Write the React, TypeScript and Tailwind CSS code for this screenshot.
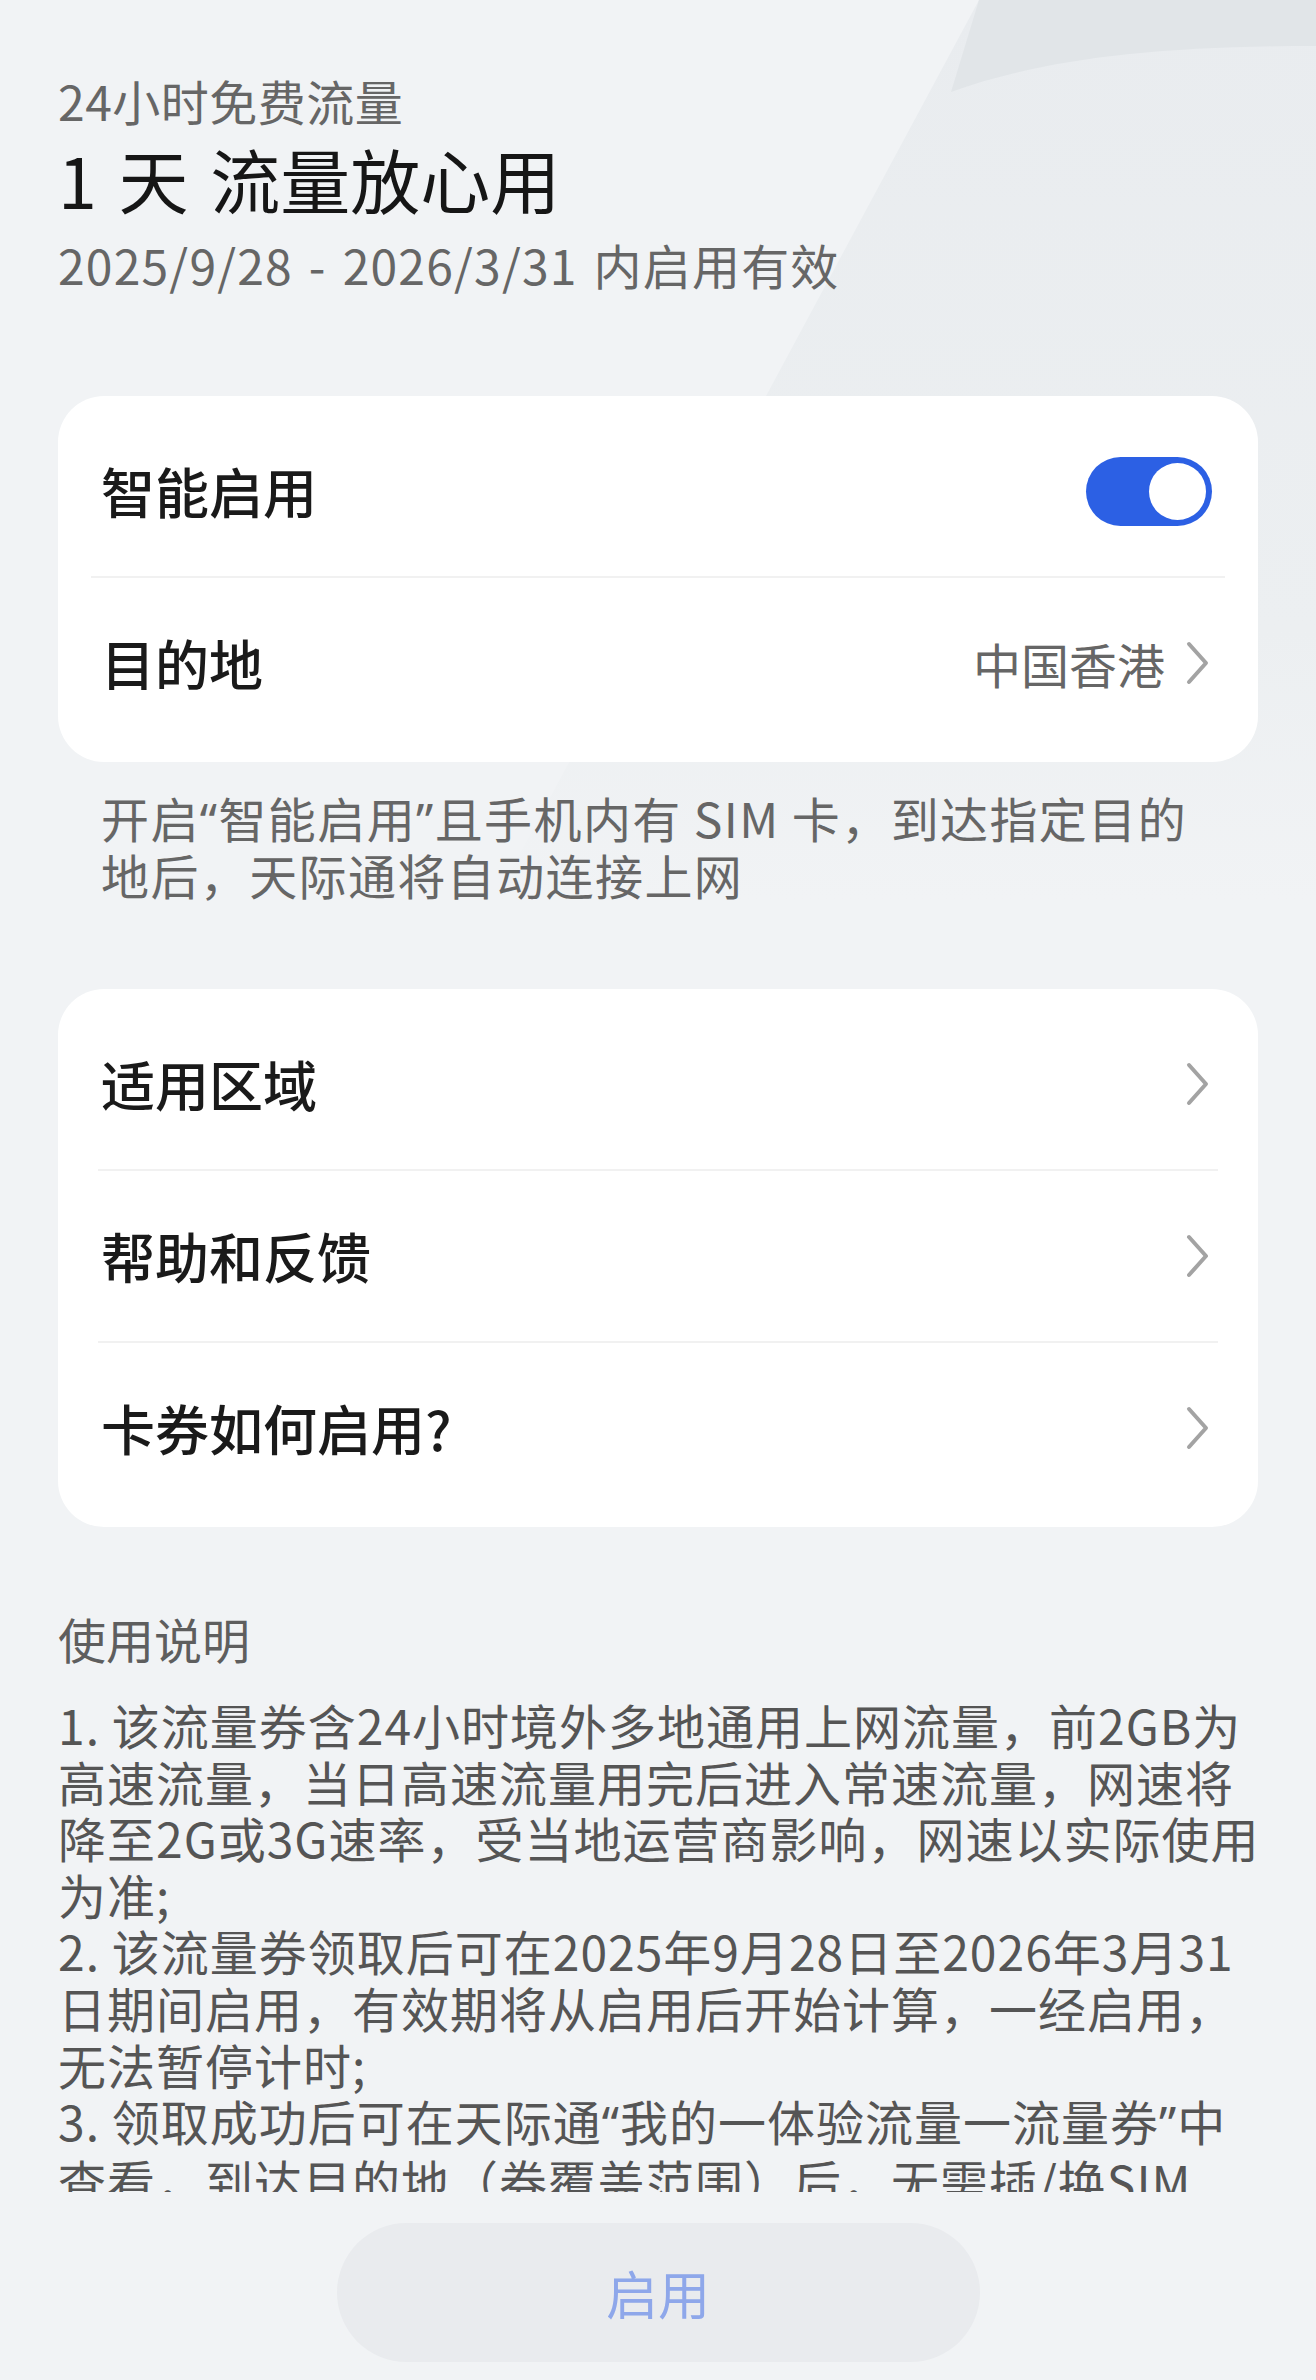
import React from "react";

function Chevron() {
  return (
    <svg width="25" height="44" viewBox="0 0 25 44" fill="none" className="shrink-0">
      <polyline points="4,3 21,22 4,41" stroke="#a3a3a3" strokeWidth="4" strokeLinecap="round" strokeLinejoin="round" />
    </svg>
  );
}

function Toggle() {
  return (
    <div className="flex h-[69px] w-[126px] items-center justify-end rounded-full bg-[#2c60e4] px-[6px]">
      <div className="h-[57px] w-[57px] rounded-full bg-white" />
    </div>
  );
}

function Row({ label, right }: { label: string; right?: React.ReactNode }) {
  return (
    <div className="flex h-[170px] items-center justify-between pl-[43px] pr-[48px]">
      <span className="text-[54px] leading-none font-medium text-[#1a1a1a]">{label}</span>
      {right ?? <Chevron />}
    </div>
  );
}

// narrow curly quotes, as the phone font draws them
function Q({ children }: { children: string }) {
  return <span className="font-['Noto_Sans',sans-serif]">{children}</span>;
}

export default function App() {
  return (
    <div className="relative h-[2380px] w-full overflow-hidden bg-[#f1f3f5] font-['Noto_Sans_CJK_SC','Noto_Sans',sans-serif]">
      {/* background decoration */}
      <svg className="absolute right-0 top-0" width="1316" height="900" viewBox="0 0 1316 900">
        <defs>
          <linearGradient id="fade" x1="0" y1="0" x2="0" y2="1">
            <stop offset="0" stopColor="#e9ecef" />
            <stop offset="0.7" stopColor="#eceff1" />
            <stop offset="1" stopColor="#f1f3f5" />
          </linearGradient>
        </defs>
        <path d="M979,0 L1316,0 L1316,900 L495,900 Z" fill="url(#fade)" />
        <path d="M979,0 L1316,0 L1316,46 C1150,46 1040,60 951,92 Z" fill="#e1e5e8" />
      </svg>

      <div className="relative flex h-[2192px] flex-col overflow-hidden px-[58px]">
        <header className="pt-[68px]">
          <p className="text-[48px] leading-[64px] tracking-[0.5px] text-[#666666]">24小时免费流量</p>
          <h1 className="mt-[5px] text-[70px] leading-[84px] text-[#161616] [word-spacing:6px]">1 天 流量放心用</h1>
          <p className="mt-[11px] text-[48px] leading-[64px] tracking-[1.2px] text-[#666666] [word-spacing:4px]">
            2025/9/28 - 2026/3/31 内启用有效
          </p>
        </header>

        <section className="mt-[100px] rounded-[46px] bg-white pt-[10px] pb-[14px]">
          <Row label="智能启用" right={<div className="-mr-[2px]"><Toggle /></div>} />
          <div className="mx-[33px] h-[2px] bg-[#f1f1f1]" />
          <Row
            label="目的地"
            right={
              <div className="flex items-center gap-[20px]">
                <span className="text-[48px] leading-none text-[#666666]">中国香港</span>
                <Chevron />
              </div>
            }
          />
        </section>

        <div className="mt-[28px] pl-[43px] text-[48px] leading-[55px] tracking-[1.4px] whitespace-nowrap text-[#666666]">
          <p>
            开启<Q>“</Q>智能启用<Q>”</Q>且手机内有 SIM 卡，到达指定目的
          </p>
          <p>地后，天际通将自动连接上网</p>
        </div>

        <section className="mt-[87px] rounded-[46px] bg-white pt-[10px] pb-[14px]">
          <Row label="适用区域" />
          <div className="mx-[40px] h-[2px] bg-[#f1f1f1]" />
          <Row label="帮助和反馈" />
          <div className="mx-[40px] h-[2px] bg-[#f1f1f1]" />
          <Row label="卡券如何启用?" />
        </section>

        <h2 className="mt-[83px] text-[48px] leading-[56px] text-[#5e5e5e]">使用说明</h2>
        <div className="mt-[30px] text-[48px] leading-[56.6px] tracking-[1px] whitespace-nowrap text-[#555555]">
          <p>1. 该流量券含24小时境外多地通用上网流量，前2GB为</p>
          <p>高速流量，当日高速流量用完后进入常速流量，网速将</p>
          <p>降至2G或3G速率，受当地运营商影响，网速以实际使用</p>
          <p>为准;</p>
          <p>2. 该流量券领取后可在2025年9月28日至2026年3月31</p>
          <p>日期间启用，有效期将从启用后开始计算，一经启用，</p>
          <p>无法暂停计时;</p>
          <p>
            3. 领取成功后可在天际通<Q>“</Q>我的一体验流量一流量券<Q>”</Q>中
          </p>
          <p>查看，到达目的地（券覆盖范围）后，无需插/换SIM</p>
        </div>
      </div>

      <div className="flex justify-center pt-[31px]">
        <button className="flex h-[139px] w-[643px] items-center justify-center rounded-full bg-[#e9ebee]">
          <span className="text-[52px] leading-none text-[#8ea7ea]">启用</span>
        </button>
      </div>
    </div>
  );
}
